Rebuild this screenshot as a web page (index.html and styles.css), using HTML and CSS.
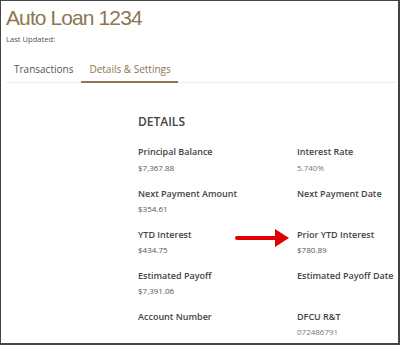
FILE: index.html
```html
<!DOCTYPE html>
<html>
<head>
<meta charset="utf-8">
<link rel="stylesheet" href="styles.css">
</head>
<body>
<div class="frame">
  <header class="header">
    <h1 class="title">Auto Loan 1234</h1>
    <div class="updated">Last Updated:</div>
    <nav class="tabs">
      <span class="tab">Transactions</span>
      <span class="tab active">Details &amp; Settings</span>
    </nav>
  </header>
  <section class="details">
    <h2 class="heading">DETAILS</h2>
    <div class="grid">
      <div class="cell"><div class="label">Principal Balance</div><div class="value">$7,367.88</div></div>
      <div class="cell"><div class="label">Interest Rate</div><div class="value light">5.740%</div></div>
      <div class="cell"><div class="label">Next Payment Amount</div><div class="value">$354.61</div></div>
      <div class="cell"><div class="label">Next Payment Date</div></div>
      <div class="cell"><div class="label">YTD Interest</div><div class="value">$434.75</div></div>
      <div class="cell"><div class="label">Prior YTD Interest</div><div class="value">$780.89</div></div>
      <div class="cell"><div class="label">Estimated Payoff</div><div class="value">$7,391.06</div></div>
      <div class="cell"><div class="label">Estimated Payoff Date</div></div>
      <div class="cell"><div class="label">Account Number</div></div>
      <div class="cell"><div class="label">DFCU R&amp;T</div><div class="value light">072486791</div></div>
    </div>
  </section>
  <svg class="arrow" width="56" height="18" viewBox="0 0 56 18">
    <path d="M3 7 H42 V11 H3 A2 2 0 0 1 3 7 Z" fill="#e00000"/>
    <polygon points="41,0 55,9 41,18" fill="#e00000"/>
  </svg>
</div>
</body>
</html>
```

FILE: styles.css
```css
html, body {
  margin: 0;
  padding: 0;
  background: #ffffff;
}

.frame {
  position: relative;
  width: 400px;
  height: 345px;
  box-sizing: border-box;
  border-top: 1px solid #444;
  border-left: 1px solid #444;
  border-right: 2px solid #444;
  border-bottom: 2px solid #444;
  overflow: hidden;
  font-family: "Open Sans", "DejaVu Sans", sans-serif;
  background: #fff;
}

.header {
  padding: 5px 2px 0 5px;
}

.title {
  margin: 0;
  font-family: "Liberation Sans", Arial, sans-serif;
  font-weight: normal;
  font-size: 21px;
  line-height: 24px;
  letter-spacing: -0.9px;
  color: #8c7651;
}

.updated {
  margin-top: 4.4px;
  font-size: 7.6px;
  line-height: 10px;
  color: #555;
}

.tabs {
  display: flex;
  margin-top: 17.7px;
  border-bottom: 1px solid #ececec;
}

.tab {
  padding: 0 7px 4.9px 8px;
  font-size: 10px;
  line-height: 14px;
  color: #555;
  border-bottom: 2px solid transparent;
  margin-bottom: -1px;
}

.tab.active {
  margin-left: 1px;
  color: #8c7651;
  border-bottom-color: #8c7651;
}

.details {
  margin: 31px 0 0 137px;
}

.heading {
  margin: 0;
  font-size: 12px;
  line-height: 16px;
  font-weight: 600;
  color: #444;
}

.grid {
  display: grid;
  grid-template-columns: 159px 159px;
  row-gap: 13px;
  margin-top: 15.5px;
}

.label {
  font-size: 9px;
  line-height: 13px;
  font-weight: 600;
  color: #444;
  white-space: nowrap;
}

.value {
  margin-top: 3.2px;
  font-size: 8px;
  line-height: 12px;
  color: #555;
}

.value.light {
  color: #777;
}

.arrow {
  position: absolute;
  left: 233px;
  top: 228px;
}
```
